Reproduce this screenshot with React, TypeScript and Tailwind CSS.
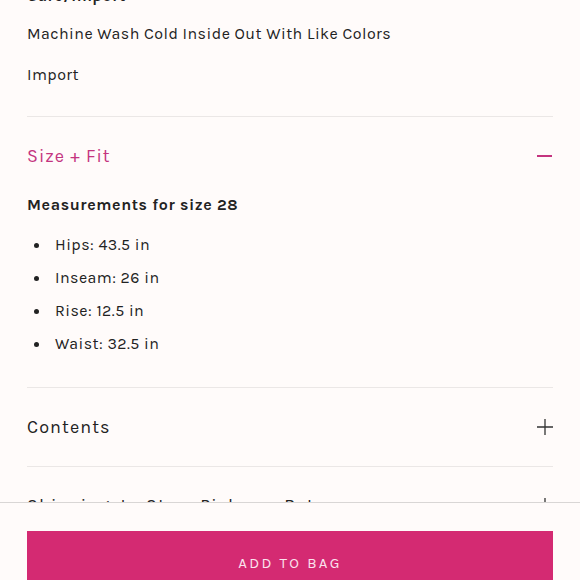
import React from "react";

const font = { fontFamily: "Karla, 'Open Sans', 'Noto Sans', sans-serif" };

export default function App() {
  return (
    <div
      className="relative h-[580px] w-[580px] overflow-hidden bg-[#fffbfa] text-[#222222]"
      style={font}
    >
      <div className="mt-[-14px] px-[27px]">
        <div className="text-[16px] font-bold leading-[20px] tracking-[0.5px]">Care/Import</div>
        <p className="mt-[18px] text-[16px] leading-[20px] tracking-[0.45px]">
          Machine Wash Cold Inside Out With Like Colors
        </p>
        <p className="mt-[21px] text-[16px] leading-[20px] tracking-[0.45px]">Import</p>
        <div className="mt-[31px] h-px bg-[#ebe7e6]" />
        <div className="flex h-[78px] items-center justify-between">
          <span className="text-[18px] tracking-[1px] text-[#c4347f]">Size + Fit</span>
          <span className="mr-px block h-[1.5px] w-[15px] bg-[#c4347f]" />
        </div>
        <div className="text-[16px] font-bold leading-[20px] tracking-[0.6px]">
          Measurements for size 28
        </div>
        <ul className="mt-[20px] flex flex-col gap-[13px] pb-[33px]">
          {["Hips: 43.5 in", "Inseam: 26 in", "Rise: 12.5 in", "Waist: 32.5 in"].map((t) => (
            <li key={t} className="flex items-center text-[16px] leading-[20px] tracking-[0.45px]">
              <span className="ml-[7px] mr-[16px] block h-[5px] w-[5px] rounded-full bg-[#222222]" />
              {t}
            </li>
          ))}
        </ul>
        <div className="h-px bg-[#ebe7e6]" />
        <div className="flex h-[78px] items-center justify-between">
          <span className="text-[18px] tracking-[1.1px]">Contents</span>
          <svg width="16" height="16" viewBox="0 0 16 16">
            <path d="M8 0v16M0 8h16" stroke="#333" strokeWidth="1.3" />
          </svg>
        </div>
        <div className="h-px bg-[#ebe7e6]" />
        <div className="flex h-[78px] items-center justify-between">
          <span className="text-[18px] tracking-[1.1px]">Shipping, In-Store Pickup + Returns</span>
          <svg width="16" height="16" viewBox="0 0 16 16">
            <path d="M8 0v16M0 8h16" stroke="#333" strokeWidth="1.3" />
          </svg>
        </div>
      </div>
      <div className="absolute left-0 right-0 top-[502px] h-[120px] border-t-[1.5px] border-[#d9d6d5] bg-[#fffbfa] px-[27px] pt-[28px]">
        <button className="flex h-[62px] w-full items-start justify-center bg-[#d42a72] pt-[21px] text-[15px] tracking-[2.3px] text-[#fbe3ee]">
          ADD TO BAG
        </button>
      </div>
    </div>
  );
}
